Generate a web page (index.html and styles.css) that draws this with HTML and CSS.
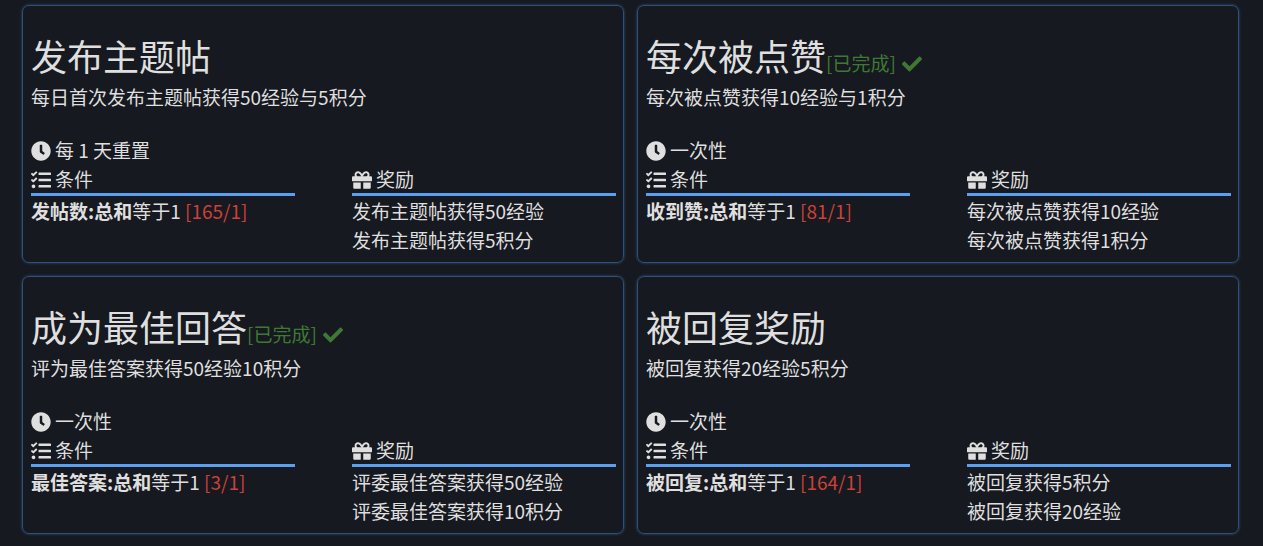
FILE: index.html
```html
<!DOCTYPE html>
<html lang="zh-CN">
<head>
  <meta charset="UTF-8">
  <meta name="viewport" content="width=device-width, initial-scale=1.0">
  <title>任务</title>
  <link rel="stylesheet" href="styles.css">
</head>
<body>
  <!-- Shared icons -->
  <svg class="icon-defs" aria-hidden="true">
    <symbol id="icon-clock" viewBox="0 0 512 512">
      <path d="M256,8C119,8,8,119,8,256S119,504,256,504,504,393,504,256,393,8,256,8Zm92.49,313h0l-20,25a16,16,0,0,1-22.49,2.5h0l-67-49.72a40,40,0,0,1-15-31.23V112a16,16,0,0,1,16-16h32a16,16,0,0,1,16,16V256l58,42.5A16,16,0,0,1,348.49,321Z"/>
    </symbol>
    <symbol id="icon-tasks" viewBox="0 0 512 512">
      <path d="M139.61 35.5a12 12 0 0 0-17 0L58.93 98.81l-22.7-22.12a12 12 0 0 0-17 0L3.53 92.41a12 12 0 0 0 0 17l47.59 47.4a12.78 12.78 0 0 0 17.61 0l15.59-15.62L156.52 69a12.09 12.09 0 0 0 .09-17zm0 159.19a12 12 0 0 0-17 0l-63.68 63.72-22.7-22.1a12 12 0 0 0-17 0L3.53 252a12 12 0 0 0 0 17L51 316.5a12.77 12.77 0 0 0 17.6 0l15.7-15.69 72.2-72.22a12 12 0 0 0 .09-16.9zM64 368c-26.49 0-48.59 21.5-48.59 48S37.53 464 64 464a48 48 0 0 0 0-96zm432 16H208a16 16 0 0 0-16 16v32a16 16 0 0 0 16 16h288a16 16 0 0 0 16-16v-32a16 16 0 0 0-16-16zm0-320H208a16 16 0 0 0-16 16v32a16 16 0 0 0 16 16h288a16 16 0 0 0 16-16V80a16 16 0 0 0-16-16zm0 160H208a16 16 0 0 0-16 16v32a16 16 0 0 0 16 16h288a16 16 0 0 0 16-16v-32a16 16 0 0 0-16-16z"/>
    </symbol>
    <symbol id="icon-gift" viewBox="0 0 512 512">
      <path d="M32 448c0 17.7 14.3 32 32 32h160V320H32v128zm256 32h160c17.7 0 32-14.3 32-32V320H288v160zm192-320h-42.1c6.2-12.1 10.1-25.5 10.1-40 0-48.5-39.5-88-88-88-41.6 0-68.5 21.3-103 68.3-34.5-47-61.4-68.3-103-68.3-48.5 0-88 39.5-88 88 0 14.5 3.8 27.9 10.1 40H32c-17.7 0-32 14.3-32 32v80c0 8.8 7.2 16 16 16h480c8.8 0 16-7.2 16-16v-80c0-17.7-14.3-32-32-32zm-326.1 0c-22.1 0-40-17.9-40-40s17.9-40 40-40c19.9 0 34.6 3.3 86.1 80h-86.1zm206.1 0h-86.1c51.4-76.5 65.7-80 86.1-80 22.1 0 40 17.9 40 40s-17.9 40-40 40z"/>
    </symbol>
    <symbol id="icon-check" viewBox="0 0 512 512">
      <path d="M173.898 439.404l-166.4-166.4c-9.997-9.997-9.997-26.206 0-36.204l36.203-36.204c9.997-9.998 26.207-9.998 36.204 0L192 312.69 432.095 72.596c9.997-9.997 26.207-9.997 36.204 0l36.203 36.204c9.997 9.997 9.997 26.206 0 36.204l-294.4 294.401c-9.998 9.997-26.207 9.997-36.204-.001z"/>
    </symbol>
  </svg>

  <main class="quest-list">
    <section class="quest">
      <h2 class="quest-title">发布主题帖</h2>
      <p class="quest-desc">每日首次发布主题帖获得50经验与5积分</p>
      <p class="quest-reset"><svg class="icon"><use href="#icon-clock"/></svg>每 1 天重置</p>
      <div class="quest-columns">
        <div>
          <h3 class="column-title"><svg class="icon"><use href="#icon-tasks"/></svg>条件</h3>
          <p><b>发帖数:总和</b>等于1 <span class="progress">[165/1]</span></p>
        </div>
        <div>
          <h3 class="column-title"><svg class="icon"><use href="#icon-gift"/></svg>奖励</h3>
          <p>发布主题帖获得50经验</p>
          <p>发布主题帖获得5积分</p>
        </div>
      </div>
    </section>

    <section class="quest">
      <h2 class="quest-title">每次被点赞<span class="done">[已完成]<svg class="icon"><use href="#icon-check"/></svg></span></h2>
      <p class="quest-desc">每次被点赞获得10经验与1积分</p>
      <p class="quest-reset"><svg class="icon"><use href="#icon-clock"/></svg>一次性</p>
      <div class="quest-columns">
        <div>
          <h3 class="column-title"><svg class="icon"><use href="#icon-tasks"/></svg>条件</h3>
          <p><b>收到赞:总和</b>等于1 <span class="progress">[81/1]</span></p>
        </div>
        <div>
          <h3 class="column-title"><svg class="icon"><use href="#icon-gift"/></svg>奖励</h3>
          <p>每次被点赞获得10经验</p>
          <p>每次被点赞获得1积分</p>
        </div>
      </div>
    </section>

    <section class="quest">
      <h2 class="quest-title">成为最佳回答<span class="done">[已完成]<svg class="icon"><use href="#icon-check"/></svg></span></h2>
      <p class="quest-desc">评为最佳答案获得50经验10积分</p>
      <p class="quest-reset"><svg class="icon"><use href="#icon-clock"/></svg>一次性</p>
      <div class="quest-columns">
        <div>
          <h3 class="column-title"><svg class="icon"><use href="#icon-tasks"/></svg>条件</h3>
          <p><b>最佳答案:总和</b>等于1 <span class="progress">[3/1]</span></p>
        </div>
        <div>
          <h3 class="column-title"><svg class="icon"><use href="#icon-gift"/></svg>奖励</h3>
          <p>评委最佳答案获得50经验</p>
          <p>评委最佳答案获得10积分</p>
        </div>
      </div>
    </section>

    <section class="quest">
      <h2 class="quest-title">被回复奖励</h2>
      <p class="quest-desc">被回复获得20经验5积分</p>
      <p class="quest-reset"><svg class="icon"><use href="#icon-clock"/></svg>一次性</p>
      <div class="quest-columns">
        <div>
          <h3 class="column-title"><svg class="icon"><use href="#icon-tasks"/></svg>条件</h3>
          <p><b>被回复:总和</b>等于1 <span class="progress">[164/1]</span></p>
        </div>
        <div>
          <h3 class="column-title"><svg class="icon"><use href="#icon-gift"/></svg>奖励</h3>
          <p>被回复获得5积分</p>
          <p>被回复获得20经验</p>
        </div>
      </div>
    </section>
  </main>
</body>
</html>
```

FILE: styles.css
```css
body {
  margin: 0;
  background-color: #16191f;
  color: #dfdfdf;
  font-family: "Noto Sans CJK SC", sans-serif;
  font-size: 19px;
  line-height: 29px;
}
h2, h3, p {
  margin: 0;
  font-weight: normal;
}
.icon-defs {
  display: none;
}
.icon {
  width: 20px;
  height: 20px;
  margin-right: 4px;
  fill: currentColor;
  vertical-align: -3px;
}
.quest-list {
  display: grid;
  grid-template-columns: 1fr 1fr;
  gap: 13px;
  padding: 5px 24px 11px 22px;
}
.quest {
  border: 1px solid #2e507a;
  border-radius: 7px;
  box-shadow: 0 0 3px #2e507a;
  padding: 27px 7px 8px 8px;
}
.quest-title {
  font-size: 36px;
  line-height: 44px;
  margin-bottom: 5px;
}
.quest-desc {
  margin-bottom: 24px;
}
.quest-columns {
  display: grid;
  grid-template-columns: 1fr 1fr;
  gap: 57px;
}
.column-title {
  font-size: 19px;
  line-height: 29px;
  border-bottom: 3px solid #5a9ff0;
}
.done {
  color: #3f7835;
  font-size: 19px;
  line-height: 1;
}
.done .icon {
  margin: 0 0 0 6px;
}
.progress {
  color: #cc4139;
}
```
